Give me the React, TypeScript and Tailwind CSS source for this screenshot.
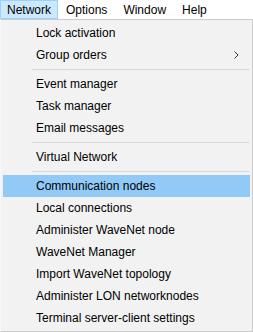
import React from 'react';

type Entry = { label: string; sub?: boolean; active?: boolean } | 'sep';

const entries: Entry[] = [
  { label: 'Lock activation' },
  { label: 'Group orders', sub: true },
  'sep',
  { label: 'Event manager' },
  { label: 'Task manager' },
  { label: 'Email messages' },
  'sep',
  { label: 'Virtual Network' },
  'sep',
  { label: 'Communication nodes', active: true },
  { label: 'Local connections' },
  { label: 'Administer WaveNet node' },
  { label: 'WaveNet Manager' },
  { label: 'Import WaveNet topology' },
  { label: 'Administer LON networknodes' },
  { label: 'Terminal server-client settings' },
];

const menus = ['Network', 'Options', 'Window', 'Help'];

const App: React.FC = () => {
  return (
    <div
      className="w-[253px] h-[332px] bg-white text-black text-[12px] overflow-hidden"
      style={{ fontFamily: '"Liberation Sans", Arial, sans-serif' }}
    >
      {/* Menu bar */}
      <div className="flex h-[19px] items-stretch">
        {menus.map((m, i) => (
          <div
            key={m}
            className={
              i === 0
                ? 'flex items-center px-[6px] bg-[#cce8ff] border border-[#99d1ff]'
                : 'flex items-center px-[7px] border border-transparent'
            }
          >
            {m}
          </div>
        ))}
      </div>

      {/* Dropdown */}
      <div className="w-[253px] h-[313px] bg-[#f2f2f2] border border-[#cccccc] border-l-[#f7f7f7] pt-[2px] pb-[2px] px-[2px]">
        {entries.map((e, i) =>
          e === 'sep' ? (
            <div key={i} className="h-[7px] flex items-center pl-[29px] pr-[1px]">
              <div className="h-px w-full bg-[#d7d7d7]" />
            </div>
          ) : (
            <div
              key={i}
              className={
                'h-[22px] flex items-center pl-[33px] pr-[11px] ' +
                (e.active ? 'bg-[#91c9f7]' : '')
              }
            >
              <span className="flex-1">{e.label}</span>
              {e.sub && (
                <svg width="5" height="8" viewBox="0 0 5 8" className="text-[#333]">
                  <path d="M0.5 0.5 L4 4 L0.5 7.5" fill="none" stroke="currentColor" strokeWidth="1" />
                </svg>
              )}
            </div>
          )
        )}
      </div>
    </div>
  );
};

export default App;
